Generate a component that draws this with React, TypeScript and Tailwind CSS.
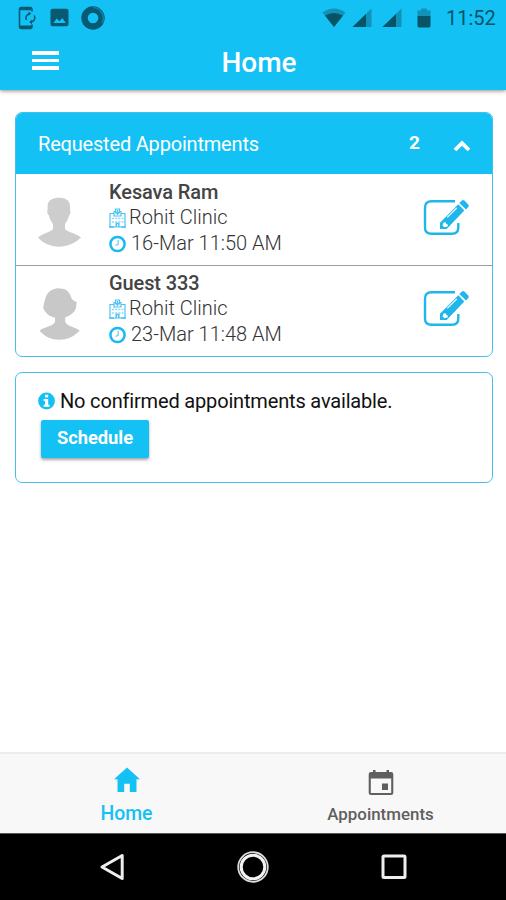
import type { ReactNode } from 'react';
import clsx from 'clsx';

interface Appointment {
    name: string;
    clinic: string;
    time: string;
    avatar: 'male' | 'female';
}

const APPOINTMENTS: ReadonlyArray<Appointment> = [
    { name: 'Kesava Ram', clinic: 'Rohit Clinic', time: '16-Mar 11:50 AM', avatar: 'male' },
    { name: 'Guest 333', clinic: 'Rohit Clinic', time: '23-Mar 11:48 AM', avatar: 'female' },
];

export default function App() {
    return (
        <div className="flex h-[900px] w-[506px] flex-col overflow-hidden bg-white font-['Roboto',sans-serif]">
            <header className="z-10 h-[90px] shrink-0 bg-[#14c1f4] shadow-[0_1px_4px_rgba(60,20,20,0.5)]">
                <StatusBar />
                <Toolbar />
            </header>

            <main className="flex flex-1 flex-col gap-[15px] px-[15px] pt-[22px]">
                <RequestedAppointments items={APPOINTMENTS} />
                <ConfirmedAppointments />
            </main>

            <TabBar />
            <SystemNav />
        </div>
    );
}

function StatusBar() {
    return (
        <div className="flex h-[35px] items-center justify-between pr-[9px] pl-[18px]">
            <div className="flex items-center gap-[14px]">
                <svg width="18" height="24" viewBox="0 0 18 24" fill="none" stroke="#075a72">
                    <path d="M14 5.5V3.5Q14 1.5 12 1.5H3.5Q1.5 1.5 1.5 3.5V20.5Q1.5 22.5 3.5 22.5H12Q14 22.5 14 20.5V18.5" strokeWidth="1.6" />
                    <path d="M2 2.6H13.6M2 21H13.6" strokeWidth="3.2" />
                    <path d="M8.4 14A4.4 4.4 0 0 1 11.4 7.8M16.2 9.5A4.4 4.4 0 0 1 13 16" strokeWidth="1.5" />
                    <path d="M10.5 5.4L13.3 7.6L10.5 9.8ZM14 13.8L11.2 16L14 18.2Z" fill="#075a72" stroke="none" />
                </svg>
                <svg width="20" height="20" viewBox="0 0 20 20">
                    <path d="M2.5 .8H16.5Q18.5 .8 18.5 2.8V16.3Q18.5 18.3 16.5 18.3H2.5Q.5 18.3 .5 16.3V2.8Q.5 .8 2.5 .8ZM3.3 15H15.8L12.3 10L9.5 13.2L6.8 10.5Z" fill="#075a72" fillRule="evenodd" />
                </svg>
                <svg width="24" height="24" viewBox="0 0 24 24" className="-ml-[3px]" fill="none">
                    <circle cx="12" cy="12" r="8.5" stroke="#075a72" strokeWidth="6.4" />
                    <path d="M12 1.5A10.5 10.5 0 0 1 21 17" stroke="#0d83a3" strokeWidth="1.6" />
                </svg>
            </div>

            <div className="flex items-center">
                <svg width="24" height="20" viewBox="0 0 24 20">
                    <path d="M.5 4.5Q12-3.5 23.5 4.5L12 19Z" fill="#1192b9" />
                    <path d="M3 7.5Q12 2.5 21 7.5L12 19Z" fill="#075467" />
                </svg>
                <SignalIcon className="ml-[6px]" />
                <SignalIcon className="ml-[10px]" />
                <svg width="14" height="20" viewBox="0 0 14 20" className="ml-[15px]">
                    <path d="M4 .5H10V2.5H13.5V9H.5V2.5H4Z" fill="#1192b9" />
                    <path d="M.5 8H13.5V17.5Q13.5 19.5 12 19.5H2Q.5 19.5 .5 17.5Z" fill="#075467" />
                </svg>
                <span className="ml-[15px] w-[51px] text-[20px] leading-none whitespace-nowrap text-[#075467]">11:52</span>
            </div>
        </div>
    );
}

function SignalIcon({ className }: Readonly<{ className: string }>) {
    return (
        <svg width="20" height="20" viewBox="0 0 20 20" className={className}>
            <path d="M19.5 .5V19H.5Z" fill="#1192b9" />
            <path d="M14 6V19H.5Z" fill="#075467" />
        </svg>
    );
}

function Toolbar() {
    return (
        <div className="grid h-[55px] grid-cols-[90px_1fr_90px] items-center">
            <button type="button" aria-label="Menu" className="flex flex-col gap-[4px] pb-[4px] pl-8">
                <span className="h-[3.5px] w-[27px] bg-white" />
                <span className="h-[3.5px] w-[27px] bg-white" />
                <span className="h-[3.5px] w-[27px] bg-white" />
            </button>
            <h1 className="pl-[12px] text-center text-[28px] leading-none font-medium text-white">Home</h1>
        </div>
    );
}

function RequestedAppointments({ items }: Readonly<{ items: ReadonlyArray<Appointment> }>) {
    return (
        <section className="h-[245px] w-[478px] overflow-hidden rounded-[7px] border-[1.5px] border-[#45bff0]">
            <div className="-mt-px flex h-[62px] items-center bg-[#14c1f4] pr-[21px] pl-[22px] text-white">
                <h2 className="flex-1 pt-[2px] text-[20px] tracking-[-0.19px]">Requested Appointments</h2>
                <span className="text-[19px] font-bold">{items.length}</span>
                <svg width="18" height="14" viewBox="0 0 18 14" className="mt-[5px] ml-[33px]" fill="none">
                    <path d="M2 11L9 4.2L16 11" stroke="white" strokeWidth="3.8" />
                </svg>
            </div>
            {items.map((item, idx) => (
                <AppointmentRow key={item.name} item={item} divided={idx > 0} />
            ))}
        </section>
    );
}

function AppointmentRow({ item, divided }: Readonly<{ item: Appointment; divided: boolean }>) {
    return (
        <div className={clsx('flex h-[91px] pr-[22px] pl-[21px]', divided ? 'border-t border-[#9c9c9c] pt-[5px]' : 'pt-[6px]')}>
            <div className="w-[72px] pt-[16px]">
                {item.avatar === 'male' ? <MaleAvatar /> : <FemaleAvatar />}
            </div>
            <div className="flex-1 text-[20px] leading-[25.4px] font-light text-[#333]">
                <p className="font-medium tracking-[-0.1px] text-[#444]">{item.name}</p>
                <p className="flex items-center gap-[3px]">
                    <HospitalIcon />
                    {item.clinic}
                </p>
                <p className="flex items-center gap-[5px]">
                    <ClockIcon />
                    {item.time}
                </p>
            </div>
            <button type="button" aria-label="Edit" className="h-[38px] pt-[18px]">
                <EditIcon />
            </button>
        </div>
    );
}

function ConfirmedAppointments() {
    return (
        <section className="h-[111px] w-[478px] rounded-[7px] border-[1.5px] border-[#45bff0] pt-[15px] pl-[22px]">
            <p className="flex items-center gap-[5px] text-[20px] leading-[26px] tracking-[-0.17px] text-[#111]">
                <svg width="17" height="18" viewBox="0 0 17 18">
                    <circle cx="8.5" cy="9" r="8.4" fill="#14c1f4" />
                    <path d="M7 2.7H10.2V5.4H7ZM5.6 7H10.2V12.8H11.5V14.8H5.6V12.8H7V9H5.6Z" fill="white" />
                </svg>
                No confirmed appointments available.
            </p>
            <button
                type="button"
                className="mt-[6px] ml-[3px] flex h-[38px] w-[108px] justify-center rounded-[2px] bg-[#14c1f4] pt-[4px] text-[18.3px] font-bold text-white shadow-[0_2px_3px_rgba(0,0,0,0.35)]"
            >
                Schedule
            </button>
        </section>
    );
}

function TabBar() {
    return (
        <nav className="grid h-[81px] shrink-0 grid-cols-2 border-t-2 border-[#ececec] bg-[#f8f8f8]">
            <Tab label="Home" active>
                <svg width="26" height="26" viewBox="0 0 26 26" fill="#14c1f4">
                    <path d="M13 .5L26 12.2H22.5V25H15.8V16.8H10.2V25H3.5V12.2H0Z" />
                </svg>
            </Tab>
            <Tab label="Appointments">
                <svg width="26" height="26" viewBox="0 0 26 26" fill="#5f5f5f">
                    <path d="M5 0H7.5V2H18.5V0H21V2H23Q25.3 2 25.3 4.3V22.7Q25.3 25 23 25H3Q.7 25 .7 22.7V4.3Q.7 2 3 2H5ZM2.8 8.5V23H23.2V8.5ZM14 13.5H20V20H14Z" fillRule="evenodd" />
                </svg>
            </Tab>
        </nav>
    );
}

function Tab({ label, active = false, children }: Readonly<{ label: string; active?: boolean; children: ReactNode }>) {
    return (
        <button
            type="button"
            className={clsx(
                'flex flex-col items-center font-medium',
                active ? 'pt-[13px] text-[19.4px] text-[#14c1f4]' : 'pt-[16px] pl-[2px] text-[16.9px] text-[#5f5f5f]',
            )}
        >
            {children}
            <span className={clsx('leading-[22px]', active ? 'mt-[10px]' : 'mt-[7px]')}>{label}</span>
        </button>
    );
}

function SystemNav() {
    return (
        <div className="flex h-[67px] shrink-0 items-center justify-center gap-[111px] border-t border-[#555] bg-black">
            <svg width="26" height="30" viewBox="0 0 26 30" fill="none" stroke="#eee">
                <path d="M23.2 3.5V26.5L3 15Z" strokeWidth="3" strokeLinejoin="round" />
            </svg>
            <svg width="34" height="34" viewBox="0 0 34 34" fill="none">
                <circle cx="17" cy="17" r="14.8" stroke="#ddd" strokeWidth="1.8" />
                <circle cx="17" cy="17" r="11.8" stroke="#f2f2f2" strokeWidth="3" />
            </svg>
            <svg width="26" height="26" viewBox="0 0 26 26" fill="none">
                <rect x="2" y="2" width="22" height="21.5" rx="1" stroke="#eee" strokeWidth="3" />
            </svg>
        </div>
    );
}

function MaleAvatar() {
    return (
        <svg width="44" height="52" viewBox="0 0 44 52" fill="#cdcdcd">
            <path d="M22 1.7C28 1.7 33 4 33 10V14C34 15.5 33.4 18.5 32 19.5C31.5 23.5 29 26 28 28V33C31 36.5 40 37.5 44 41.5C38 47.5 30 50.7 22 50.7C14 50.7 6 47.5 1 41.5C5 37.5 13 36.5 16 33V28C15 26 12.5 23.5 12 19.5C10.4 18.5 9.8 15.5 10.6 14V10C10.6 4 16 1.7 22 1.7Z" />
        </svg>
    );
}

function FemaleAvatar() {
    return (
        <svg width="44" height="54" viewBox="0 0 44 54" fill="#c8c8c8">
            <path d="M17 2.2L19.5 1.2L22.5 1.5C29 1 33 5 34.5 11.5C36 14 39 14.5 40 15.2C39 17 39.5 20 38.5 22.5C37 26 33 28.5 28.2 30.5V35C31 40 39 40 42.7 43.7C37 49.5 30 52.7 22.5 52.7C14.5 52.7 7.5 49.5 2.5 43.7C6 40 15 40 18 35V30.5C13 30 8.5 26.5 6.2 21C6.8 17 7 15 8 13C9 7.5 12 3.5 17 2.2Z" />
        </svg>
    );
}

function HospitalIcon() {
    return (
        <svg width="17" height="20" viewBox="0 0 17 20" fill="none" stroke="#4cc3f3">
            <path d="M5 5.5H1V19H16V5.5H12" strokeWidth="1.2" />
            <path d="M5 8V3.5H6.5V1H10.5V3.5H12V8Z" strokeWidth="1.2" />
            <path d="M8.5 2V7M6 4.7H11" strokeWidth="1.5" />
            <path d="M3 10.5H14.5M3 14H14.5" stroke="#8fd9f8" strokeWidth="1.3" strokeDasharray="2 1.2" />
            <path d="M0 19H5M12 19H17M7.2 19V15.5H9.8V19" strokeWidth="1.5" />
        </svg>
    );
}

function ClockIcon() {
    return (
        <svg width="17" height="18" viewBox="0 0 17 18" fill="none" stroke="#1cb9f0">
            <circle cx="8.5" cy="9" r="7.1" strokeWidth="2.5" />
            <path d="M9.2 5V9.3L6.5 10.5" stroke="#6fcdf5" strokeWidth="1.3" />
        </svg>
    );
}

function EditIcon() {
    return (
        <svg width="48" height="38" viewBox="0 0 48 38">
            <path d="M33 3.2H9.5Q3 3.2 3 9.7V29.5Q3 35.8 9.5 35.8H30Q36.3 35.8 36.3 29.5V25" fill="none" stroke="#1fb6ec" strokeWidth="2.4" />
            <path d="M18 31V24.7L36.3 6.3L42.3 12.6L24.7 31Z" fill="#1fb6ec" />
            <path d="M37.3 5L40 2.4Q41.2 1.7 42.4 2.6L46.4 6.8Q47.2 7.8 46.4 9L44 11.4Z" fill="#1fb6ec" />
            <path d="M20.5 27.5L21.5 24.5L23.5 24.2L24.5 26L26 26.7L25.6 28.5L22.5 29.3Z" fill="white" />
            <path d="M25.3 19.3L34.7 10" stroke="white" strokeWidth="1.1" />
        </svg>
    );
}
